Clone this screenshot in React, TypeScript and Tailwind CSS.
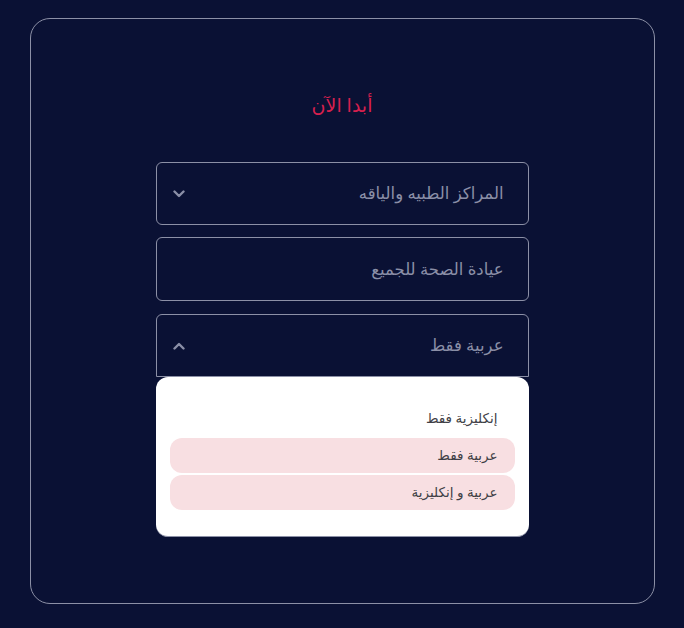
import React from "react";

const Chevron = ({ up }: { up?: boolean }) => (
  <svg width="12" height="8" viewBox="0 0 12 8" className={up ? "rotate-180" : ""}>
    <path d="M1.5 1.5 L6 6 L10.5 1.5" fill="none" stroke="#8b8fa7" strokeWidth="2.4" strokeLinecap="round" strokeLinejoin="round" />
  </svg>
);

export default function App() {
  return (
    <div dir="rtl" className="min-h-[628px] w-full bg-[#0a1134] pt-[18px] [font-family:'Noto_Sans','DejaVu_Sans',sans-serif]">
      <div className="mx-auto flex h-[586px] w-[625px] flex-col items-center rounded-[20px] border border-[#8c90a6] pt-[72px]">
        <h1 className="text-[19px] leading-[28px] text-[#d6204e]">أبدا الآن</h1>
        <div className="mt-[43px] flex w-[373px] flex-col">
          <div className="flex h-[63px] items-center justify-between rounded-[6px] border border-[#8c90a6] pl-[16px] pr-[24px]">
            <span className="text-[16.5px] text-[#8b8fa7]">المراكز الطبيه والياقه</span>
            <Chevron />
          </div>
          <div className="mt-[12px] flex h-[64px] items-center rounded-[6px] border border-[#8c90a6] pr-[24px]">
            <span className="text-[16.5px] text-[#8b8fa7]">عيادة الصحة للجميع</span>
          </div>
          <div className="relative mt-[13px]">
            <div className="flex h-[63px] items-center justify-between rounded-t-[6px] border border-[#8c90a6] pl-[16px] pr-[24px]">
              <span className="text-[16.5px] text-[#8b8fa7]">عربية فقط</span>
              <Chevron up />
            </div>
            <div className="absolute left-0 right-0 top-full z-10 flex h-[160px] flex-col gap-[2px] rounded-[12px] border-b border-[#8c90a6] bg-white px-[14px] pt-[24px]">
              <div className="flex h-[35px] items-center rounded-[12px] pr-[17px] text-[13.5px] text-[#3f3f46]">إنكليزية فقط</div>
              <div className="flex h-[35px] items-center rounded-[12px] bg-[#f8dfe2] pr-[17px] text-[13.5px] text-[#3f3f46]">عربية فقط</div>
              <div className="flex h-[35px] items-center rounded-[12px] bg-[#f8dfe2] pr-[17px] text-[13.5px] text-[#3f3f46]">عربية و إنكليزية</div>
            </div>
          </div>
        </div>
      </div>
    </div>
  );
}
